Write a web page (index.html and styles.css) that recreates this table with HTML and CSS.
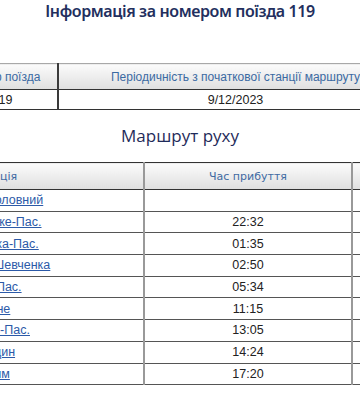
FILE: index.html
```html
<!DOCTYPE html>
<html lang="uk">
<head>
<meta charset="utf-8">
<title>Інформація за номером поїзда 119</title>
<link rel="stylesheet" href="styles.css">
</head>
<body>
<div class="page">
  <h1 class="title">Інформація за номером поїзда 119</h1>
  <table class="info">
    <colgroup><col class="info-c1"><col class="info-c2"></colgroup>
    <thead>
      <tr><th>Номер поїзда</th><th>Періодичність з початкової станції маршруту</th></tr>
    </thead>
    <tbody>
      <tr><td>119</td><td>9/12/2023</td></tr>
    </tbody>
  </table>
  <h2 class="subtitle">Маршрут руху</h2>
  <table class="route">
    <colgroup><col class="route-c1"><col class="route-c2"><col class="route-c3"></colgroup>
    <thead>
      <tr><th>Станція</th><th>Час прибуття</th><th>Час відправлення</th></tr>
    </thead>
    <tbody>
      <tr><td><a href="#">Дніпро-Головний</a></td><td></td><td>20:53</td></tr>
      <tr><td><a href="#">Кам'янське-Пас.</a></td><td>22:32</td><td>22:35</td></tr>
      <tr><td><a href="#">Знам'янка-Пас.</a></td><td>01:35</td><td>01:50</td></tr>
      <tr><td><a href="#">Імені Т.Г. Шевченка</a></td><td>02:50</td><td>02:55</td></tr>
      <tr><td><a href="#">Київ-Пас.</a></td><td>05:34</td><td>05:57</td></tr>
      <tr><td><a href="#">Рівне</a></td><td>11:15</td><td>11:22</td></tr>
      <tr><td><a href="#">Ковель-Пас.</a></td><td>13:05</td><td>13:25</td></tr>
      <tr><td><a href="#">Ягодин</a></td><td>14:24</td><td>15:40</td></tr>
      <tr><td><a href="#">Хелм</a></td><td>17:20</td><td></td></tr>
    </tbody>
  </table>
</div>
</body>
</html>
```
FILE: styles.css
```css
* { box-sizing: border-box; }
html, body { margin: 0; padding: 0; background: #fff; }
body {
  width: 360px;
  height: 400px;
  overflow: hidden;
  font-family: "Liberation Sans", Arial, sans-serif;
  color: #222;
}
/* page is wider than the window and scrolled horizontally */
.page { width: 760px; margin-left: -200px; }

.title {
  margin: 0;
  text-align: center;
  font-family: "Noto Sans", sans-serif;
  font-weight: 600;
  font-size: 16px;
  line-height: 22px;
  letter-spacing: -0.4px;
  color: #232f5e;
}

table { border-collapse: collapse; }
th, td { padding: 0; text-align: center; vertical-align: middle; }
th { font-weight: normal; background: linear-gradient(#fbfbfb, #dfdfdf); }

.info { width: 464px; margin: 41px auto 0; }
.info-c1 { width: 110px; }
.info-c2 { width: 354px; }
.info th {
  height: 26px;
  border-top: 1px solid #a8a8a8;
  border-bottom: 1px solid #333;
  font-size: 12px;
  color: #3b6aa2;
}
.info td {
  height: 20px;
  border-bottom: 1px solid #333;
  font-size: 12.5px;
}
.info th + th, .info td + td { border-left: 2px solid #3a3a3a; }

.subtitle {
  margin: 14px 0;
  text-align: center;
  font-family: "Open Sans", sans-serif;
  font-weight: 400;
  font-size: 17px;
  line-height: 24px;
  color: #1f2b5a;
}

.route { width: 668px; margin: 0 auto; }
.route-c1 { width: 298px; }
.route-c2 { width: 208px; }
.route-c3 { width: 162px; }
.route th {
  height: 27px;
  border-top: 1px solid #333;
  border-bottom: 1px solid #333;
  font-family: "DejaVu Sans", sans-serif;
  font-size: 11px;
  color: #3f6aa2;
}
.route td {
  height: 21.7px;
  border-bottom: 1px solid #555;
  font-size: 12.5px;
}
.route th + th, .route td + td { border-left: 2px solid #999; }
.route a { color: #2c5aa8; text-decoration: underline; }
```
